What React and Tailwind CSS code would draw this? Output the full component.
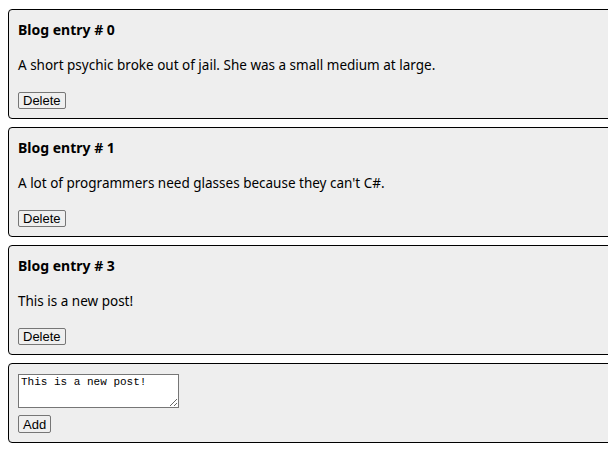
const posts = [
  { id: 0, body: "A short psychic broke out of jail. She was a small medium at large." },
  { id: 1, body: "A lot of programmers need glasses because they can't C#." },
  { id: 3, body: "This is a new post!" },
];

const sans = { fontFamily: '"Noto Sans", "Open Sans", sans-serif' };

export default function App() {
  return (
    <div className="w-[608px] h-[469px] overflow-hidden bg-white pl-2 pt-[9px]" style={sans}>
      <div className="w-[620px] flex flex-col gap-2">
        {posts.map(post => (
          <div
            key={post.id}
            className="h-[110px] border border-black rounded-[4px] bg-[#eeeeee] pl-[9px] pt-[11px] text-black"
          >
            <h4 className="text-[14px] font-bold leading-[18px]">
              Blog entry # {post.id}
            </h4>
            <p className="mt-[17px] text-[13.5px] leading-[18px]">{post.body}</p>
            <button className="block mt-[18px] h-[17px] px-[4px] border border-[#767676] rounded-[2px] bg-[#efefef] text-[13px] leading-[15px] font-['Liberation_Sans',Arial,sans-serif]">
              Delete
            </button>
          </div>
        ))}
        <div className="h-[80px] border border-black rounded-[4px] bg-[#eeeeee] pl-[9px] pt-[10px]">
          <textarea
            defaultValue="This is a new post!"
            className="block w-[161px] h-[34px] border border-[#767676] bg-white px-[2px] py-[1px] text-[11px] leading-[13px] font-['Liberation_Mono',monospace] resize-y"
          />
          <button className="block mt-[7px] h-[18px] px-[4px] border border-[#767676] rounded-[2px] bg-[#efefef] text-[13px] leading-[15px] font-['Liberation_Sans',Arial,sans-serif]">
            Add
          </button>
        </div>
      </div>
    </div>
  );
}
